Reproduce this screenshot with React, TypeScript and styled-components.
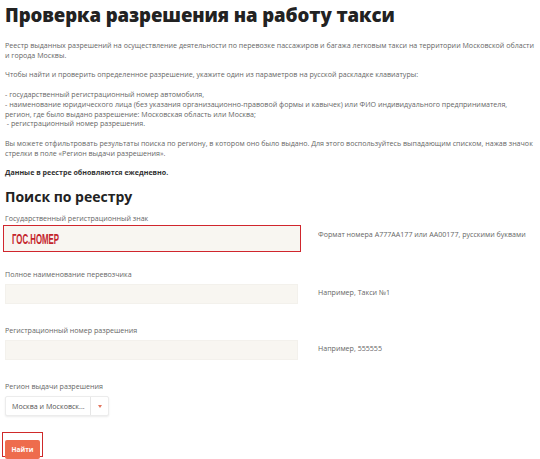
import React from 'react';
import styled, { createGlobalStyle } from 'styled-components';

const GlobalStyle = createGlobalStyle`
  html, body {
    margin: 0;
    padding: 0;
    background: #ffffff;
  }
  body {
    font-family: "Open Sans", "DejaVu Sans", sans-serif;
    color: #555;
  }
`;

const Page = styled.div`
  width: 540px;
  height: 459px;
  overflow: hidden;
  padding: 0 5px;
  box-sizing: border-box;
`;

const Title = styled.h1`
  margin: 0;
  padding-top: 2px;
  font-size: 18.6px;
  line-height: 26px;
  font-weight: 800;
  color: #222;
  letter-spacing: -0.1px;
`;

const Text = styled.p<{ $bold?: boolean }>`
  margin: 0 0 10px;
  font-size: 7.1px;
  line-height: 9.7px;
  color: ${p => (p.$bold ? '#333' : '#666')};
  font-weight: ${p => (p.$bold ? 700 : 400)};
  white-space: nowrap;
`;

const Intro = styled.div`
  padding-top: 13px;
`;

const SubTitle = styled.h2`
  margin: 2px 0 0;
  font-size: 14px;
  line-height: 18px;
  font-weight: 700;
  color: #222;
`;

const Form = styled.form`
  display: flex;
  flex-direction: column;
  margin-top: 7px;
`;

const Field = styled.div<{ $gap?: number }>`
  display: grid;
  grid-template-columns: 293px 1fr;
  column-gap: 20px;
  grid-template-rows: auto auto;
  margin-bottom: ${p => p.$gap ?? 21}px;
`;

const Label = styled.label`
  grid-column: 1 / 3;
  font-size: 7.1px;
  line-height: 10px;
  color: #666;
  margin-bottom: 5px;
`;

const Input = styled.input`
  box-sizing: border-box;
  width: 293px;
  height: 20px;
  padding: 0 6px;
  border: 1px solid #f3f1ec;
  background: #f8f6f1;
  outline: none;
  font-family: inherit;
  font-size: 7px;
  color: #555;
`;

const PlateBox = styled.div`
  box-sizing: border-box;
  width: 298px;
  height: 27px;
  margin: -3px 0 -4px -2px;
  padding: 0 8px;
  border: 1.5px solid #d0262d;
  background: #f8f6f1;
  display: flex;
  align-items: center;
  overflow: hidden;
`;

const PlateText = styled.span`
  display: inline-block;
  font-family: "Liberation Sans", "DejaVu Sans", sans-serif;
  font-size: 14px;
  font-weight: 700;
  color: #c4252c;
  white-space: nowrap;
  transform: scaleX(0.56);
  transform-origin: left center;
  margin-top: 1px;
`;

const Hint = styled.span<{ $lift?: number }>`
  align-self: center;
  margin-bottom: ${p => p.$lift ?? 5}px;
  font-size: 7.1px;
  color: #666;
  white-space: nowrap;
`;

const Select = styled.div`
  display: flex;
  align-items: stretch;
  width: 104px;
  height: 20px;
  box-sizing: border-box;
  border: 1px solid #ececec;
  border-radius: 2px;
  box-shadow: 0 1px 2px rgba(0, 0, 0, 0.08);
  background: #fff;
`;

const SelectValue = styled.span`
  flex: 1;
  display: flex;
  align-items: center;
  padding-left: 6px;
  font-size: 7.1px;
  color: #555;
  white-space: nowrap;
  overflow: hidden;
`;

const SelectArrow = styled.span`
  width: 17px;
  border-left: 1px solid #e6e6e6;
  display: flex;
  align-items: center;
  justify-content: center;
  &::after {
    content: '';
    border-left: 2px solid transparent;
    border-right: 2px solid transparent;
    border-top: 3px solid #e2765f;
  }
`;

const ButtonFrame = styled.div`
  width: 41px;
  height: 25px;
  box-sizing: border-box;
  border: 1px solid #cf2a2a;
  padding: 2px;
  margin-left: -3px;
`;

const Button = styled.button`
  width: 100%;
  height: 100%;
  border: none;
  border-radius: 2px;
  background: #ee6c4d;
  color: #fff;
  font-family: inherit;
  font-size: 6.5px;
  font-weight: 700;
  padding: 0;
`;

export default function App() {
  return (
    <Page>
      <GlobalStyle />
      <Title>Проверка разрешения на работу такси</Title>
      <Intro>
        <Text>
          Реестр выданных разрешений на осуществление деятельности по перевозке пассажиров и багажа легковым такси на территории Московской области
          <br />
          и города Москвы.
        </Text>
        <Text>Чтобы найти и проверить определенное разрешение, укажите один из параметров на русской раскладке клавиатуры:</Text>
        <Text>
          - государственный регистрационный номер автомобиля,
          <br />
          - наименование юридического лица (без указания организационно-правовой формы и кавычек) или ФИО индивидуального предпринимателя,
          <br />
          регион, где было выдано разрешение: Московская область или Москва;
          <br />
          &nbsp;- регистрационный номер разрешения.
        </Text>
        <Text>
          Вы можете отфильтровать результаты поиска по региону, в котором оно было выдано. Для этого воспользуйтесь выпадающим списком, нажав значок
          <br />
          стрелки в поле «Регион выдачи разрешения».
        </Text>
        <Text $bold>Данные в реестре обновляются ежедневно.</Text>
      </Intro>
      <SubTitle>Поиск по реестру</SubTitle>
      <Form onSubmit={e => e.preventDefault()}>
        <Field>
          <Label>Государственный регистрационный знак</Label>
          <PlateBox>
            <PlateText>ГОС.НОМЕР</PlateText>
          </PlateBox>
          <Hint $lift={9}>Формат номера А777АА177 или АА00177, русскими буквами</Hint>
        </Field>
        <Field>
          <Label>Полное наименование перевозчика</Label>
          <Input />
          <Hint>Например, Такси №1</Hint>
        </Field>
        <Field>
          <Label>Регистрационный номер разрешения</Label>
          <Input />
          <Hint>Например, 555555</Hint>
        </Field>
        <Field $gap={16}>
          <Label>Регион выдачи разрешения</Label>
          <Select>
            <SelectValue>Москва и Московск...</SelectValue>
            <SelectArrow />
          </Select>
        </Field>
        <ButtonFrame>
          <Button type="submit">Найти</Button>
        </ButtonFrame>
      </Form>
    </Page>
  );
}
